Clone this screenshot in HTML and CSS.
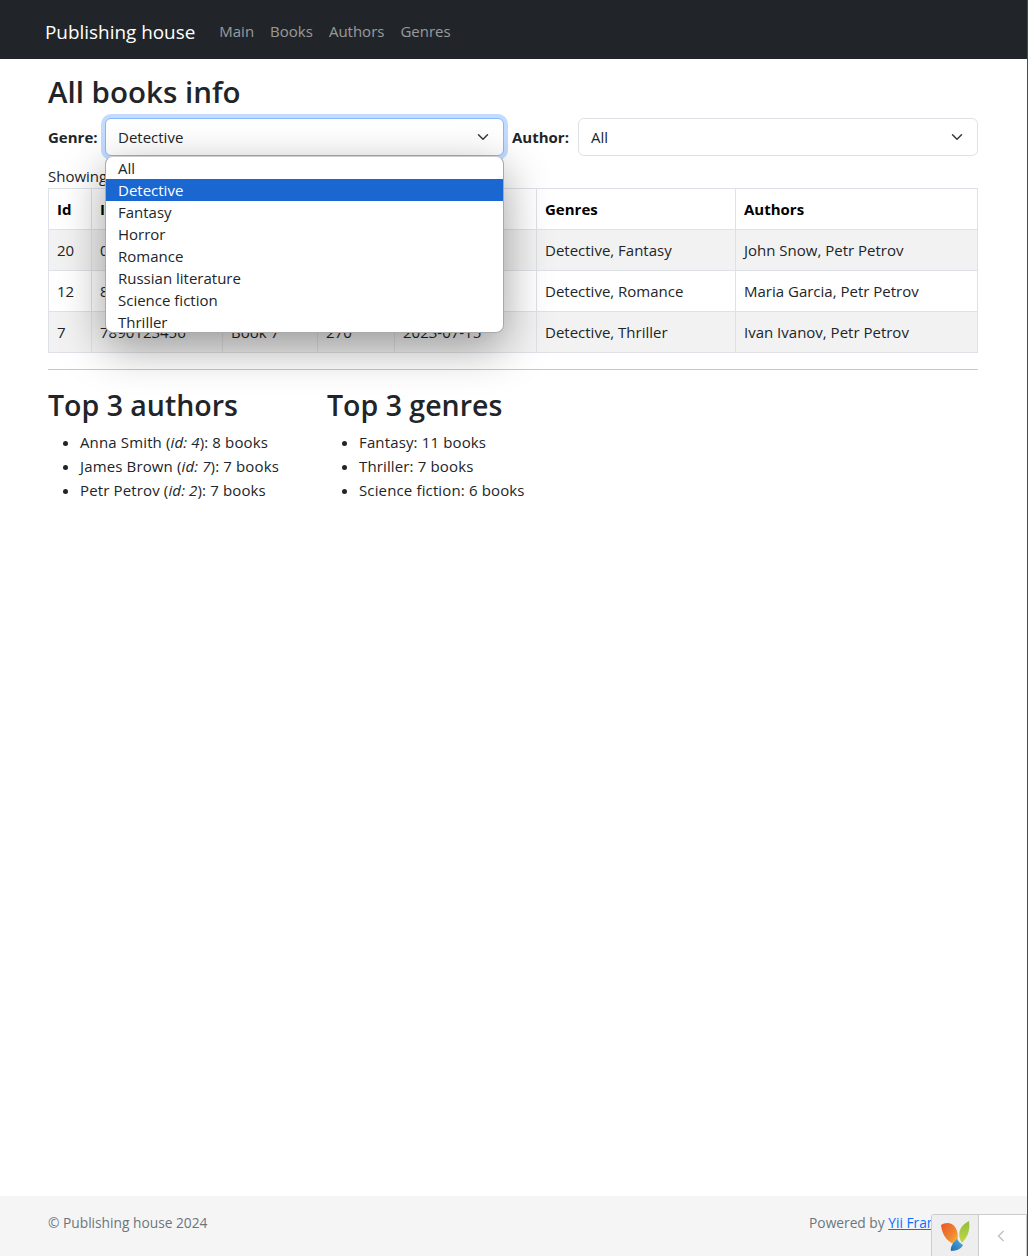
FILE: index.html
```html
<!DOCTYPE html>
<html lang="en">
<head>
    <meta charset="UTF-8">
    <title>All books info</title>
    <link rel="stylesheet" href="styles.css">
</head>
<body>

    <header class="navbar">
        <a class="brand" href="#">Publishing house</a>
        <nav>
            <a href="#">Main</a>
            <a href="#">Books</a>
            <a href="#">Authors</a>
            <a href="#">Genres</a>
        </nav>
    </header>

    <main class="container">
        <h1>All books info</h1>

        <form class="filters">
            <label>Genre:</label>
            <div class="select-wrap">
                <div class="select select-open">
                    <span>Detective</span>
                    <svg class="chevron" viewBox="0 0 16 16"><path d="M2 5l6 6 6-6"/></svg>
                </div>
                <!-- open dropdown of the genre select -->
                <ul class="select-list">
                    <li>All</li>
                    <li class="picked">Detective</li>
                    <li>Fantasy</li>
                    <li>Horror</li>
                    <li>Romance</li>
                    <li>Russian literature</li>
                    <li>Science fiction</li>
                    <li>Thriller</li>
                </ul>
            </div>
            <label class="label-author">Author:</label>
            <div class="select-wrap">
                <div class="select">
                    <span>All</span>
                    <svg class="chevron" viewBox="0 0 16 16"><path d="M2 5l6 6 6-6"/></svg>
                </div>
            </div>
        </form>

        <div class="summary">Showing 1-3 of 3 items.</div>
        <table>
            <colgroup>
                <col class="col-id">
                <col class="col-isbn">
                <col class="col-title">
                <col class="col-pages">
                <col class="col-date">
                <col class="col-genres">
                <col class="col-authors">
            </colgroup>
            <tr>
                <th>Id</th>
                <th>ISBN</th>
                <th>Title</th>
                <th>Pages</th>
                <th>Published</th>
                <th>Genres</th>
                <th>Authors</th>
            </tr>
            <tr>
                <td>20</td>
                <td>0123456789</td>
                <td>Book 20</td>
                <td>310</td>
                <td>2023-11-02</td>
                <td>Detective, Fantasy</td>
                <td>John Snow, Petr Petrov</td>
            </tr>
            <tr>
                <td>12</td>
                <td>8901234567</td>
                <td>Book 12</td>
                <td>240</td>
                <td>2023-08-21</td>
                <td>Detective, Romance</td>
                <td>Maria Garcia, Petr Petrov</td>
            </tr>
            <tr>
                <td>7</td>
                <td>7890123456</td>
                <td>Book 7</td>
                <td>270</td>
                <td>2023-07-15</td>
                <td>Detective, Thriller</td>
                <td>Ivan Ivanov, Petr Petrov</td>
            </tr>
        </table>

        <hr>

        <div class="tops">
            <section>
                <h2>Top 3 authors</h2>
                <ul>
                    <li>Anna Smith (<i>id: 4</i>): 8 books</li>
                    <li>James Brown (<i>id: 7</i>): 7 books</li>
                    <li>Petr Petrov (<i>id: 2</i>): 7 books</li>
                </ul>
            </section>
            <section>
                <h2>Top 3 genres</h2>
                <ul>
                    <li>Fantasy: 11 books</li>
                    <li>Thriller: 7 books</li>
                    <li>Science fiction: 6 books</li>
                </ul>
            </section>
        </div>
    </main>

    <footer>
        <span>© Publishing house 2024</span>
        <span>Powered by <a href="#">Yii Framework</a></span>
    </footer>

    <!-- debug toolbar, collapsed -->
    <div class="debug-bar">
        <div class="debug-logo">
            <svg viewBox="0 0 30 32" width="30" height="32">
                <defs>
                    <linearGradient id="petalOrange" x1="0" y1="0" x2="1" y2="1">
                        <stop offset="0" stop-color="#e8552a"/>
                        <stop offset="0.6" stop-color="#f0862e"/>
                        <stop offset="1" stop-color="#f5c13c"/>
                    </linearGradient>
                    <linearGradient id="petalGreen" x1="0" y1="0" x2="0" y2="1">
                        <stop offset="0" stop-color="#8fc03a"/>
                        <stop offset="1" stop-color="#c4d64a"/>
                    </linearGradient>
                    <linearGradient id="petalBlue" x1="1" y1="0" x2="0" y2="1">
                        <stop offset="0" stop-color="#55b4e6"/>
                        <stop offset="1" stop-color="#1c69b0"/>
                    </linearGradient>
                </defs>
                <path fill="url(#petalOrange)" d="M1 5C5 2 12 2 15 7c3 4 4 11 1 18C9 23 2 16 1 5z"/>
                <path fill="url(#petalGreen)" d="M29 1c1 8 0 14-7 22C18 17 17 7 29 1z"/>
                <path fill="url(#petalBlue)" d="M17 19c2 3 4 5 6 6-1 3-6 6-12 6-1-4 2-8 6-12z"/>
            </svg>
        </div>
        <div class="debug-toggle">
            <svg viewBox="0 0 8 12" width="8" height="12"><path d="M6.5 1L1.5 6l5 5"/></svg>
        </div>
    </div>

</body>
</html>
```

FILE: styles.css
```css
* {
    box-sizing: border-box;
}
html {
    height: 100%;
    background-color: #4a4a4a;
}
body {
    margin: 0;
    width: 1027px;
    min-height: 1256px;
    display: flex;
    flex-direction: column;
    font-family: "Open Sans", "Noto Sans", sans-serif;
    font-size: 15px;
    line-height: 24px;
    color: #212529;
    background-color: #fff;
}
a {
    text-decoration: none;
}

.navbar {
    height: 59px;
    background-color: #212529;
    display: flex;
    align-items: center;
    padding: 2px 45px 0;
}
.brand {
    color: #fff;
    font-size: 18.9px;
    padding-top: 2px;
    margin-right: 24px;
}
.navbar nav {
    display: flex;
    gap: 16px;
}
.navbar nav a {
    color: rgba(255, 255, 255, 0.55);
}

.container {
    flex: 1;
    width: 930px;
    margin-left: 48px;
    padding-top: 13px;
}
h1 {
    font-size: 29.5px;
    line-height: 40px;
    font-weight: 600;
    margin: 0 0 6px;
}
h2 {
    font-size: 28.5px;
    line-height: 36px;
    font-weight: 600;
    margin: 0 0 7px;
}

.filters {
    display: grid;
    grid-template-columns: 57px 399px 74px 400px;
    align-items: center;
    height: 38px;
}
.filters label {
    font-weight: 700;
}
.filters .label-author {
    padding-left: 8px;
}
.select-wrap {
    position: relative;
}
.select {
    height: 38px;
    display: flex;
    align-items: center;
    justify-content: space-between;
    padding: 0 14px 0 12px;
    border: 1px solid #dee2e6;
    border-radius: 6px;
    background-color: #fff;
}
.select-open {
    border-color: #86b7fe;
    box-shadow: 0 0 0 4px rgba(13, 110, 253, 0.25);
}
.chevron {
    width: 12px;
    height: 12px;
}
.chevron path {
    fill: none;
    stroke: #343a40;
    stroke-width: 2;
    stroke-linecap: round;
    stroke-linejoin: round;
}

.select-list {
    position: absolute;
    top: 38px;
    left: 0;
    right: 0;
    height: 177px;
    margin: 0;
    padding: 0;
    list-style: none;
    overflow: hidden;
    background-color: #fff;
    border: 1px solid #a9a9a9;
    border-top-color: #ccc;
    border-radius: 8px;
    box-shadow: 0 14px 45px rgba(0, 0, 0, 0.38);
    z-index: 5;
}
.select-list li {
    height: 22px;
    line-height: 22px;
    padding-left: 12px;
    color: #212529;
}
.select-list li.picked {
    background-color: #1a67d2;
    color: #fff;
}

.summary {
    margin-top: 8px;
    height: 24px;
}
table {
    width: 929px;
    table-layout: fixed;
    border-collapse: collapse;
}
th, td {
    border: 1px solid #dee2e6;
    padding: 8px;
    height: 41px;
    text-align: left;
    font-weight: 400;
}
th {
    font-weight: 700;
    color: #000;
}
tr:nth-child(even) td {
    background-color: #f2f2f2;
}
.col-id { width: 43px; }
.col-isbn { width: 131px; }
.col-title { width: 95px; }
.col-pages { width: 77px; }
.col-date { width: 142px; }
.col-genres { width: 199px; }
.col-authors { width: 242px; }

hr {
    margin: 16px 0 17px;
    border: 0;
    border-top: 1px solid #c6c7c8;
}

.tops {
    display: flex;
    gap: 48px;
}
.tops ul {
    margin: 0;
    padding-left: 32px;
}
.tops li {
    letter-spacing: 0.14px;
}

footer {
    height: 60px;
    background-color: #f5f5f5;
    color: #6c757d;
    font-size: 13.75px;
    display: flex;
    align-items: center;
    justify-content: space-between;
    padding: 0 48px 6px;
}
footer a {
    color: #0d6efd;
    text-decoration: underline;
}

.debug-bar {
    position: fixed;
    left: 931px;
    bottom: 0;
    width: 96px;
    height: 42px;
    display: flex;
    background-color: #fff;
    border: 1px solid #ccc;
    border-bottom: 0;
    border-radius: 3px 0 0 0;
}
.debug-logo {
    width: 47px;
    display: flex;
    align-items: center;
    justify-content: center;
    background-color: #eee;
    border-right: 1px solid #ccc;
}
.debug-toggle {
    flex: 1;
    display: flex;
    align-items: center;
    justify-content: center;
    padding-right: 4px;
}
.debug-toggle path {
    fill: none;
    stroke: #bbb;
    stroke-width: 1.2;
}
```
